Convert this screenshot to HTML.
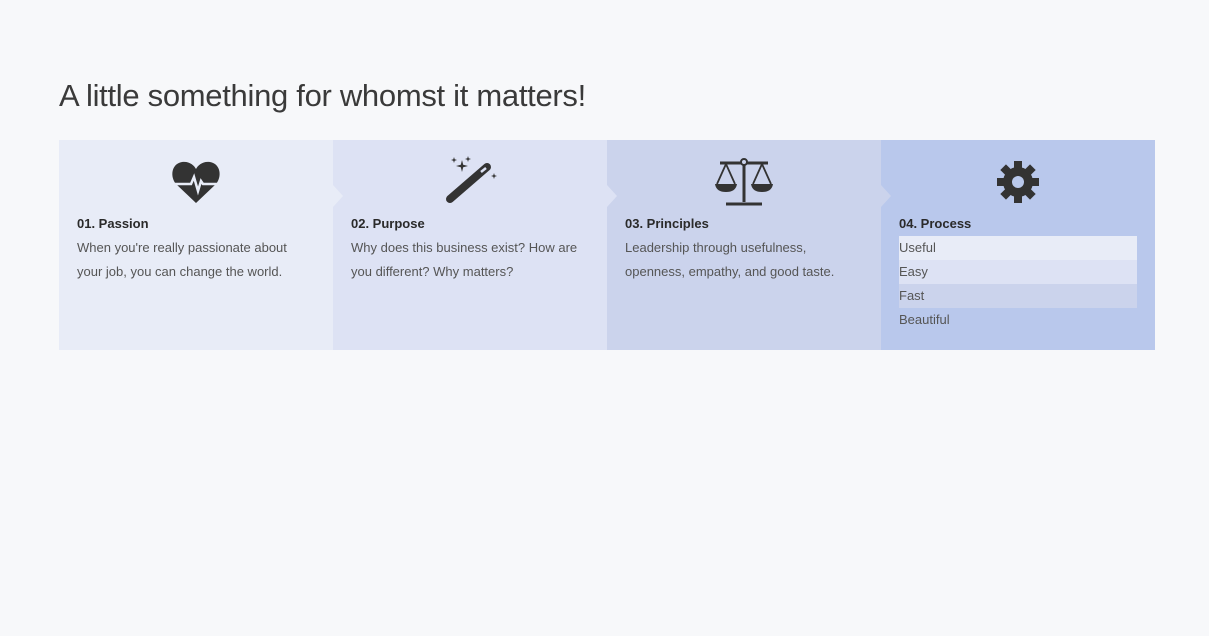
<!DOCTYPE html>
<html><head><style>
body{margin:0;background:#f7f8fa;font-family:"Liberation Sans",sans-serif;color:#333;width:1209px;height:636px;overflow:hidden;position:relative}
h1{position:absolute;left:59px;top:78px;margin:0;font-weight:300;font-size:31px;color:#3a3a3a;letter-spacing:-0.3px}
.row{position:absolute;left:59px;top:140px;width:1096px;height:210px;display:flex}
.p{width:274px;height:210px;position:relative;box-sizing:border-box;padding:0 18px}
.p1{background:#e8ecf7}.p2{background:#dde2f4}.p3{background:#cbd3ec}.p4{background:#b9c8ec}
.arr{position:absolute;right:-10px;top:45px;width:0;height:0;border-top:11px solid transparent;border-bottom:11px solid transparent;border-left:10px solid;z-index:2}
.p1 .arr{border-left-color:#e8ecf7}.p2 .arr{border-left-color:#dde2f4}.p3 .arr{border-left-color:#cbd3ec}
.ic{position:absolute;left:0;right:0;top:16px;height:52px;text-align:center}
.ic svg{overflow:visible}
h3{position:absolute;top:76px;left:18px;margin:0;font-size:13px;font-weight:bold;color:#2a2a2a}
.t{position:absolute;top:96px;left:18px;right:18px;font-size:13px;line-height:24px;color:#555}
.li{display:block;height:24px;line-height:24px;font-size:13px;color:#555}
</style></head><body>
<h1>A little something for whomst it matters!</h1>
<div class="row">
<div class="p p1"><div class="arr"></div>
<div class="ic"><svg width="52" height="52" viewBox="0 0 52 52"><path d="M26 47L6 28C0 21 1 8 12 6C19 5 24 9 26 13C28 9 33 5 40 6C51 8 52 21 46 28Z" fill="#333"/><path d="M2 28h19l3-7 4 14 3-10 2 3h19" stroke="#e8ecf7" stroke-width="2.5" fill="none" stroke-linejoin="miter"/></svg></div>
<h3>01. Passion</h3><div class="t">When you're really passionate about your job, you can change the world.</div></div>
<div class="p p2"><div class="arr"></div>
<div class="ic"><svg width="52" height="52" viewBox="0 0 52 52"><path d="M6 43L43 11" stroke="#333" stroke-width="8" stroke-linecap="round"/><path d="M37 16l5-4" stroke="#dde2f4" stroke-width="2.5"/><path d="M18 4l1.2 4.8 4.8 1.2-4.8 1.2-1.2 4.8-1.2-4.8-4.8-1.2 4.8-1.2Z M10 1l.7 2.3 2.3.7-2.3.7-.7 2.3-.7-2.3-2.3-.7 2.3-.7Z M24 0l.7 2.3 2.3.7-2.3.7-.7 2.3-.7-2.3-2.3-.7 2.3-.7Z M50 17l.7 2.3 2.3.7-2.3.7-.7 2.3-.7-2.3-2.3-.7 2.3-.7Z" fill="#333"/></svg></div>
<h3>02. Purpose</h3><div class="t">Why does this business exist? How are you different? Why matters?</div></div>
<div class="p p3"><div class="arr"></div>
<div class="ic"><svg width="62" height="52" viewBox="0 0 62 52"><g stroke="#333" stroke-width="3" fill="none"><path d="M31 6v40M7 7h48M13 48h36"/><circle cx="31" cy="6" r="3" fill="#cbd3ec" stroke-width="2"/><path d="M13 8L4 28M13 8l9 20M49 8l-9 20M49 8l9 20" stroke-width="1.8"/></g><path d="M2 28h22c-1 6-5 8-11 8S3 34 2 28ZM38 28h22c-1 6-5 8-11 8s-10-2-11-8Z" fill="#333"/></svg></div>
<h3>03. Principles</h3><div class="t">Leadership through usefulness, openness, empathy, and good taste.</div></div>
<div class="p p4">
<div class="ic"><svg width="52" height="52" viewBox="0 0 52 52"><g transform="translate(26 26)"><g fill="#333"><circle r="15"/><rect x="-4" y="-21" width="8" height="8"/><rect x="-4" y="-21" width="8" height="8" transform="rotate(45)"/><rect x="-4" y="-21" width="8" height="8" transform="rotate(90)"/><rect x="-4" y="-21" width="8" height="8" transform="rotate(135)"/><rect x="-4" y="-21" width="8" height="8" transform="rotate(180)"/><rect x="-4" y="-21" width="8" height="8" transform="rotate(225)"/><rect x="-4" y="-21" width="8" height="8" transform="rotate(270)"/><rect x="-4" y="-21" width="8" height="8" transform="rotate(315)"/></g><circle r="6" fill="#b9c8ec"/></g></svg></div>
<h3>04. Process</h3><div class="t">
<span class="li" style="background:#e8ecf7">Useful</span><span class="li" style="background:#dde2f4">Easy</span><span class="li" style="background:#cbd3ec">Fast</span><span class="li">Beautiful</span></div></div>
</div>
</body></html>
